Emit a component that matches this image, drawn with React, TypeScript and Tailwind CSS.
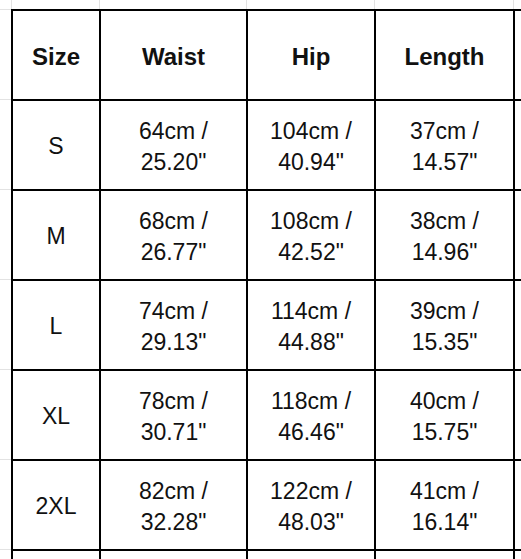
import React from "react";

const cols = [86, 145, 126, 137, 120];

const rows = [
  ["S", "64cm /\n25.20\"", "104cm /\n40.94\"", "37cm /\n14.57\""],
  ["M", "68cm /\n26.77\"", "108cm /\n42.52\"", "38cm /\n14.96\""],
  ["L", "74cm /\n29.13\"", "114cm /\n44.88\"", "39cm /\n15.35\""],
  ["XL", "78cm /\n30.71\"", "118cm /\n46.46\"", "40cm /\n15.75\""],
  ["2XL", "82cm /\n32.28\"", "122cm /\n48.03\"", "41cm /\n16.14\""],
];

function Cell({ text, bold }: { text: string; bold?: boolean }) {
  return (
    <div className="bg-white flex items-center justify-center text-center">
      <span
        className={`whitespace-pre text-[#111] pt-[3px] ${
          bold ? "font-bold text-[24px] leading-[30px]" : "text-[23px] leading-[31px]"
        }`}
      >
        {text}
      </span>
    </div>
  );
}

export default function App() {
  return (
    <div className="h-[559px] w-[521px] overflow-hidden bg-white font-['Liberation_Sans',Arial,sans-serif]">
      {/* spreadsheet grid above table */}
      <div className="flex h-[9px] pl-[11px]">
        {cols.map((w, i) => (
          <div key={i} className="shrink-0 border-l border-[#e2e2e2]" style={{ width: w + 2 }} />
        ))}
      </div>
      <div className="flex">
        {/* spreadsheet grid left of table */}
        <div className="w-[11px] shrink-0 flex flex-col">
          {Array.from({ length: 7 }).map((_, i) => (
            <div key={i} className="h-[90px] shrink-0 border-t border-[#e2e2e2]" />
          ))}
        </div>
        <div className="shrink-0 grid grid-cols-[86px_145px_126px_137px_120px] auto-rows-[88px] gap-[2px] p-[2px] bg-black">
          <Cell text="Size" bold />
          <Cell text="Waist" bold />
          <Cell text="Hip" bold />
          <Cell text="Length" bold />
          <Cell text="" />
          {rows.map((r) => (
            <React.Fragment key={r[0]}>
              {r.map((t, j) => (
                <Cell key={j} text={t} />
              ))}
              <Cell text="" />
            </React.Fragment>
          ))}
          {cols.map((_, i) => (
            <Cell key={`e${i}`} text="" />
          ))}
        </div>
      </div>
    </div>
  );
}
